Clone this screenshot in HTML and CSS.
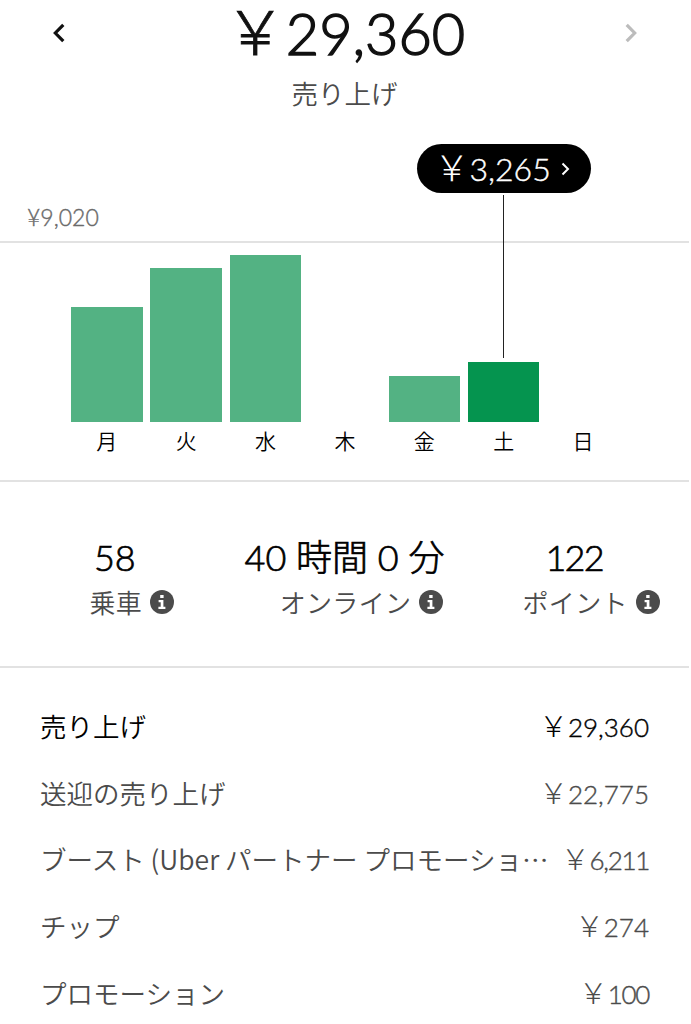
FILE: index.html
```html
<!DOCTYPE html>
<html lang="ja">
<head>
  <meta charset="UTF-8" />
  <meta name="viewport" content="width=device-width, initial-scale=1.0"/>
  <title>売り上げ</title>
  <link rel="stylesheet" href="styles.css">
</head>
<body>
  <div class="app">
    <header class="header">
      <button class="nav-btn" aria-label="前の週">
        <svg width="14" height="20" viewBox="0 0 14 20"><path d="M11.3 1.8 3.3 10l8 8.2" fill="none" stroke="#111" stroke-width="3.2"/></svg>
      </button>
      <h1 class="total"><span class="yen">&#xFFE5;</span>29,360</h1>
      <button class="nav-btn next" aria-label="次の週">
        <svg width="14" height="20" viewBox="0 0 14 20"><path d="M2.7 1.8 10.7 10l-8 8.2" fill="none" stroke="#bcbcbc" stroke-width="3.2"/></svg>
      </button>
    </header>
    <p class="subtitle">売り上げ</p>

    <!-- Weekly chart -->
    <section class="chart">
      <div class="chart-max">¥9,020</div>
      <div class="bars">
        <div class="bar" style="height: 115px"></div>
        <div class="bar" style="height: 154px"></div>
        <div class="bar" style="height: 167.5px"></div>
        <div class="bar" style="height: 0"></div>
        <div class="bar" style="height: 46.5px"></div>
        <div class="bar active" style="height: 60.5px">
          <div class="tooltip">
            <span class="tooltip-value"><span class="yen">&#xFFE5;</span>3,265</span>
            <svg width="9" height="14" viewBox="0 0 9 14"><path d="M1.5 1.5 7 7l-5.5 5.5" fill="none" stroke="#fff" stroke-width="2"/></svg>
          </div>
        </div>
        <div class="bar" style="height: 0"></div>
      </div>
      <div class="days">
        <span>月</span><span>火</span><span>水</span><span>木</span><span>金</span><span>土</span><span>日</span>
      </div>
    </section>

    <!-- Stats -->
    <section class="stats">
      <div class="stat">
        <div class="stat-value">58</div>
        <div class="stat-label">乗車
          <svg class="info" viewBox="0 0 24 24"><circle cx="12" cy="12" r="12" fill="#4b4b4b"/><path d="M10.2 5h3.4v3h-3.4zM8.6 10h4.8v6.8h2V19H8.4v-2.2h2.3v-4.6H8.6z" fill="#fff"/></svg>
        </div>
      </div>
      <div class="stat">
        <div class="stat-value">40 時間 0 分</div>
        <div class="stat-label">オンライン
          <svg class="info" viewBox="0 0 24 24"><circle cx="12" cy="12" r="12" fill="#4b4b4b"/><path d="M10.2 5h3.4v3h-3.4zM8.6 10h4.8v6.8h2V19H8.4v-2.2h2.3v-4.6H8.6z" fill="#fff"/></svg>
        </div>
      </div>
      <div class="stat">
        <div class="stat-value tight">122</div>
        <div class="stat-label">ポイント
          <svg class="info" viewBox="0 0 24 24"><circle cx="12" cy="12" r="12" fill="#4b4b4b"/><path d="M10.2 5h3.4v3h-3.4zM8.6 10h4.8v6.8h2V19H8.4v-2.2h2.3v-4.6H8.6z" fill="#fff"/></svg>
        </div>
      </div>
    </section>

    <!-- Breakdown -->
    <ul class="list">
      <li class="row main"><span class="name">売り上げ</span><span class="price"><span class="yen">&#xFFE5;</span>29,360</span></li>
      <li class="row"><span class="name">送迎の売り上げ</span><span class="price"><span class="yen">&#xFFE5;</span>22,775</span></li>
      <li class="row"><span class="name">ブースト (Uber パートナー プロモーショ…</span><span class="price tight"><span class="yen">&#xFFE5;</span>6,211</span></li>
      <li class="row"><span class="name">チップ</span><span class="price"><span class="yen">&#xFFE5;</span>274</span></li>
      <li class="row"><span class="name">プロモーション</span><span class="price tight"><span class="yen">&#xFFE5;</span>100</span></li>
    </ul>
  </div>
</body>
</html>
```
FILE: styles.css
```css
* {
  box-sizing: border-box;
}

body {
  margin: 0;
  background-color: #fff;
  color: #000;
  font-family: "Noto Sans CJK JP DemiLight", "Noto Sans CJK JP", sans-serif;
  font-weight: 350;
}

.app {
  width: 689px;
}

/* Header */
.header {
  display: flex;
  justify-content: space-between;
  align-items: center;
  height: 66px;
  padding: 0 51px 0 52px;
}

.nav-btn {
  display: flex;
  padding: 0;
  border: none;
  background: none;
  cursor: pointer;
}

/* Light digits, thickened a little */
.total,
.chart-max,
.tooltip,
.stat-value,
.price {
  font-family: Lato, "Noto Sans CJK JP", sans-serif;
  font-weight: 300;
  -webkit-text-stroke: 0.4px currentColor;
}

.total {
  margin: 0;
  font-size: 57.5px;
  line-height: 66px;
  color: #111;
  -webkit-text-stroke-width: 1.5px;
}

.yen {
  font-size: 1.1em;
  line-height: 1;
  -webkit-text-stroke-width: 0;
}

.total .yen {
  font-size: 1.06em;
  -webkit-text-stroke-width: 0.8px;
}

/* Values with a 1 in them */
.tight {
  letter-spacing: -0.05em;
}

.tight .yen {
  letter-spacing: 0;
}

.subtitle {
  margin: 7px 0 0;
  font-size: 26.5px;
  line-height: 40px;
  text-align: center;
  color: #4b4b4b;
}

/* Chart */
.chart {
  height: 369px;
  border-bottom: 2px solid #e2e2e2;
}

.chart-max {
  height: 130px;
  padding: 90px 27px 0;
  border-bottom: 2px solid #e2e2e2;
  font-size: 23px;
  line-height: 28px;
  color: #6b6b6b;
}

.bars,
.days {
  display: grid;
  grid-template-columns: repeat(7, 71.5px);
  column-gap: 7.9px;
  padding-left: 71px;
}

.bars {
  height: 179px;
  align-items: end;
}

.bar {
  position: relative;
  background-color: #53b283;
}

.bar.active {
  background-color: #05944f;
}

.days {
  padding-top: 3px;
  font-size: 21px;
  line-height: 30px;
  text-align: center;
}

/* Selected day */
.tooltip {
  position: absolute;
  bottom: 229px;
  left: 50%;
  width: 174px;
  height: 49px;
  transform: translateX(-50%);
  display: flex;
  justify-content: flex-end;
  align-items: center;
  gap: 10px;
  padding-right: 21px;
  border-radius: 25px;
  background-color: #000;
  color: #fff;
  font-size: 32px;
}

.tooltip::after {
  content: "";
  position: absolute;
  top: 51px;
  left: 86px;
  width: 1px;
  height: 163px;
  background-color: #222;
}

/* Stats */
.stats {
  display: grid;
  grid-template-columns: 1fr 1fr 1fr;
  height: 186px;
  padding-top: 51px;
  border-bottom: 2px solid #e2e2e2;
}

.stat {
  display: flex;
  flex-direction: column;
  align-items: center;
}

.stat-value {
  font-size: 36px;
  line-height: 49px;
  white-space: nowrap;
  -webkit-text-stroke-width: 0.7px;
}

.stat-label {
  display: flex;
  align-items: center;
  gap: 8px;
  padding-left: 34px;
  font-size: 26px;
  line-height: 40px;
  letter-spacing: 0.3px;
  color: #4b4b4b;
}

.info {
  width: 24px;
  height: 24px;
}

/* Breakdown list */
.list {
  height: 356px;
  margin: 0;
  padding: 24px 40px 0;
  list-style: none;
  overflow: hidden;
}

.row {
  display: flex;
  justify-content: space-between;
  align-items: center;
  height: 66.8px;
  font-size: 26.5px;
  color: #4b4b4b;
  white-space: nowrap;
}

.price {
  padding-top: 3px;
  font-size: 26px;
}

.row.main {
  color: #000;
}
```
